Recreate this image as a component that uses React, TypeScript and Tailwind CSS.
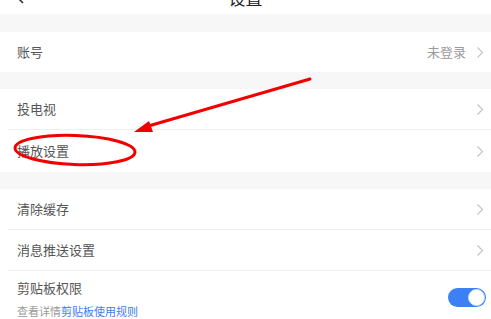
import React from "react";

const Chevron = () => (
  <svg width="8" height="13" viewBox="0 0 8 13" fill="none">
    <path d="M1.5 1.5 L6.5 6.5 L1.5 11.5" stroke="#c4c4c4" strokeWidth="1.2" />
  </svg>
);

const Row = ({ label, right, divider = true, h = "h-[41px]" }: { label: string; right?: string; divider?: boolean; h?: string }) => (
  <div className="bg-white pl-[8px]">
    <div className={`${h} flex items-center pr-[7px] pl-[9px] ${divider ? "border-b border-[#efefef]" : ""}`}>
      <span className="text-[13px] text-[#555555]">{label}</span>
      <div className="ml-auto flex items-center gap-[10px]">
        {right && <span className="text-[13px] text-[#9a9a9a]">{right}</span>}
        <Chevron />
      </div>
    </div>
  </div>
);

export default function App() {
  return (
    <div
      className="relative w-[491px] h-[319px] overflow-hidden bg-[#f7f7f7]"
      style={{ fontFamily: '"Noto Sans CJK SC", "Noto Sans", sans-serif' }}
    >
      <div className="h-[14px] overflow-hidden bg-white relative">
        <div className="mt-[-24px] h-[44px] flex items-center justify-center">
          <span className="text-[17px] text-[#222222]">设置</span>
        </div>
        <svg className="absolute left-[14px] top-[-10px]" width="12" height="18" viewBox="0 0 12 18" fill="none">
          <path d="M9 1 L3 7 L9 13" stroke="#333333" strokeWidth="1.6" />
        </svg>
      </div>
      <div className="h-[18px]" />
      <div className="bg-white">
        <Row label="账号" right="未登录" divider={false} h="h-[40px]" />
      </div>
      <div className="h-[17px]" />
      <Row label="投电视" />
      <Row label="播放设置" divider={false} h="h-[42px]" />
      <div className="h-[17px]" />
      <Row label="清除缓存" />
      <Row label="消息推送设置" />
      <div className="bg-white pl-[8px] h-[60px]">
        <div className="flex items-start pl-[9px] pr-[5px] pt-[8px]">
          <div className="flex flex-col">
            <span className="text-[13px] leading-[18px] text-[#555555]">剪贴板权限</span>
            <span className="text-[11px] leading-[16px] mt-[6px] text-[#9a9a9a]">
              查看详情<span className="text-[#3b7cf0]">剪贴板使用规则</span>
            </span>
          </div>
          <div className="ml-auto mt-[9px] w-[38px] h-[19px] rounded-full bg-[#3d80f5] relative">
            <div className="absolute right-[1px] top-[1px] w-[17px] h-[17px] rounded-full bg-white border border-[#cfe0fb]" />
          </div>
        </div>
      </div>
      <svg className="absolute left-0 top-0 pointer-events-none" width="491" height="319" viewBox="0 0 491 319" fill="none">
        <line x1="310" y1="79" x2="145" y2="127" stroke="#f20000" strokeWidth="3" strokeLinecap="round" />
        <polygon points="134,132 149,121 153,132" fill="#f20000" />
        <ellipse cx="75" cy="150" rx="60" ry="14.5" stroke="#f20000" strokeWidth="3" transform="rotate(2 75 150)" />
      </svg>
    </div>
  );
}
